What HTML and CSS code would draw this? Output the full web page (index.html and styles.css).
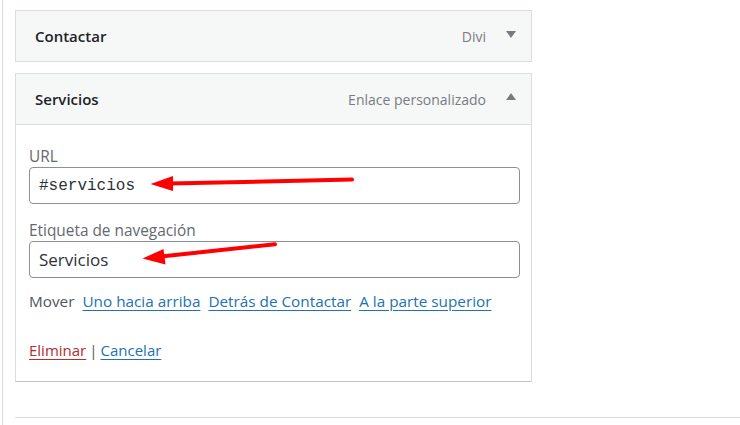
FILE: index.html
```html
<!DOCTYPE html>
<html lang="es">
<head>
    <meta charset="UTF-8">
    <title>Menú - Servicios</title>
    <link rel="stylesheet" href="styles.css">
</head>
<body>
    <div class="frame">
        <div class="item">
            <div class="item-head">
                <span class="item-title">Contactar</span>
                <span class="item-type">Divi</span>
                <span class="toggle down"></span>
            </div>
        </div>

        <div class="item open">
            <div class="item-head">
                <span class="item-title">Servicios</span>
                <span class="item-type">Enlace personalizado</span>
                <span class="toggle up"></span>
            </div>
            <div class="item-settings">
                <label class="field">
                    <span class="field-label">URL</span>
                    <input class="code" type="text" value="#servicios">
                </label>
                <label class="field">
                    <span class="field-label">Etiqueta de navegación</span>
                    <input type="text" value="Servicios">
                </label>
                <div class="move">
                    Mover
                    <a href="#">Uno hacia arriba</a>
                    <a href="#">Detrás de Contactar</a>
                    <a href="#">A la parte superior</a>
                </div>
                <div class="actions">
                    <a href="#" class="delete">Eliminar</a><span class="pipe">|</span><a href="#">Cancelar</a>
                </div>
            </div>
        </div>

        <div class="sep"></div>
    </div>

    <!-- flechas rojas de la captura -->
    <svg class="arrows" width="740" height="425" viewBox="0 0 740 425">
        <line x1="352" y1="179.5" x2="168" y2="183.6" />
        <polygon points="150.5,184 173,176 173,191" />
        <line x1="275" y1="244.3" x2="161" y2="256.5" />
        <polygon points="142.5,258.5 163.5,249 165.5,264.5" />
    </svg>
</body>
</html>
```

FILE: styles.css
```css
body {
    margin: 0;
    background: #fff;
    font-family: "Open Sans", "Noto Sans", sans-serif;
    color: #1d2327;
}
.frame {
    margin-left: 2px;
    border-left: 1px solid #dcdcde;
    min-height: 425px;
    padding: 10px 0 0 12px;
    box-sizing: border-box;
}
.item {
    width: 517px;
    box-sizing: border-box;
    margin-bottom: 11px;
}
.item-head {
    display: flex;
    align-items: center;
    height: 52px;
    box-sizing: border-box;
    padding: 0 15px 0 19px;
    background: #f6f7f7;
    border: 1px solid #dcdcde;
}
.item-title {
    flex: 1;
    font-size: 15px;
    font-weight: 600;
}
.item-type {
    font-size: 14px;
    color: #787c82;
}
.toggle {
    width: 0;
    height: 0;
    margin-left: 20px;
    border-left: 5px solid transparent;
    border-right: 5px solid transparent;
}
.toggle.down {
    border-top: 7px solid #787c82;
    margin-top: -3px;
}
.toggle.up {
    border-bottom: 7px solid #787c82;
    margin-top: -5px;
}
.item-settings {
    border: 1px solid #dcdcde;
    border-top: none;
    border-bottom-color: #c3c4c7;
    padding: 22px 11px 21px 13px;
    font-size: 15px;
}
.field {
    display: block;
    margin-bottom: 17px;
}
.field-label {
    display: block;
    line-height: 20px;
    font-size: 15.4px;
    color: #646970;
}
.field input {
    display: block;
    width: 100%;
    height: 37px;
    box-sizing: border-box;
    padding: 0 9px;
    border: 1px solid #8c8f94;
    border-radius: 4px;
    font-family: "Open Sans", "Noto Sans", sans-serif;
    font-size: 17px;
    color: #2c3338;
    background: #fff;
}
.field input.code {
    font-family: "Liberation Mono", "DejaVu Sans Mono", monospace;
    font-size: 16px;
}
.move {
    margin-top: -4px;
    line-height: 20px;
    font-size: 15.3px;
    color: #50575e;
}
.move a {
    margin-left: 4px;
}
.actions {
    margin-top: 29px;
    line-height: 20px;
    color: #50575e;
}
.pipe {
    margin: 0 3px 0 3px;
}
a {
    color: #2271b1;
    text-decoration: underline;
    text-underline-offset: 3px;
}
a.delete {
    color: #b32d2e;
}
.sep {
    margin-top: 35px;
    border-top: 1px solid #dcdcde;
}
.arrows {
    position: absolute;
    left: 0;
    top: 0;
    pointer-events: none;
}
.arrows line {
    stroke: #f00;
    stroke-width: 4;
    stroke-linecap: round;
}
.arrows polygon {
    fill: #f00;
}
```
